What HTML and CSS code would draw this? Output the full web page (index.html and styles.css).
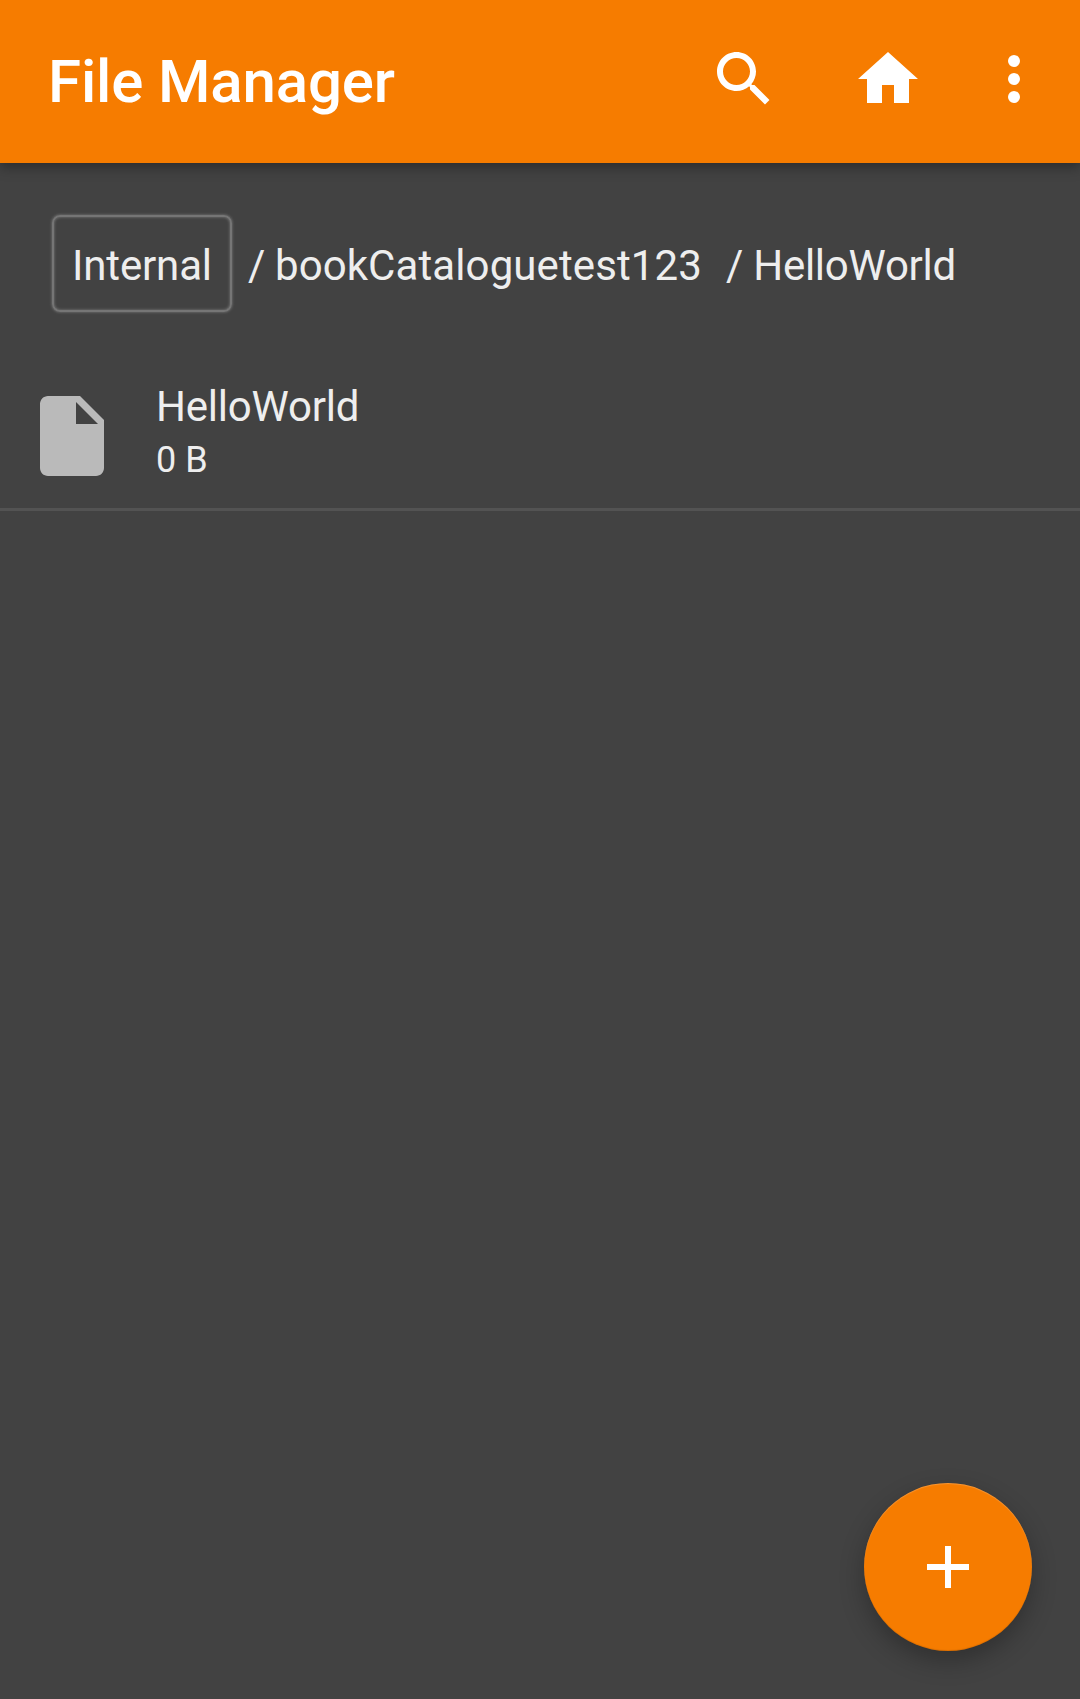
FILE: index.html
```html
<!DOCTYPE html>
<html lang="en">
<head>
<meta charset="utf-8">
<title>File Manager</title>
<link rel="stylesheet" href="styles.css">
</head>
<body>
<header class="app-bar">
  <h1 class="title">File Manager</h1>
  <div class="actions">
    <svg class="icon" viewBox="0 0 24 24"><path d="M15.5 14h-.79l-.28-.27C15.41 12.59 16 11.11 16 9.5 16 5.91 13.09 3 9.5 3S3 5.91 3 9.5 5.91 16 9.5 16c1.61 0 3.09-.59 4.23-1.57l.27.28v.79l5 4.99L20.49 19l-4.99-5zm-6 0C7.01 14 5 11.99 5 9.5S7.01 5 9.5 5 14 7.01 14 9.5 11.99 14 9.5 14z"/></svg>
    <svg class="icon" viewBox="0 0 24 24"><path d="M10 20v-6h4v6h5v-8h3L12 3 2 12h3v8z"/></svg>
    <svg class="icon icon-more" viewBox="0 0 24 24"><circle cx="12" cy="6" r="2"/><circle cx="12" cy="12" r="2"/><circle cx="12" cy="18" r="2"/></svg>
  </div>
</header>
<main>
  <nav class="path">
    <span class="storage">Internal</span>
    <span class="crumb">/ bookCataloguetest123</span>
    <span class="crumb crumb-last">/ HelloWorld</span>
  </nav>
  <div class="file">
    <svg class="file-icon" viewBox="0 0 24 24"><path d="M6 2c-1.1 0-2 .9-2 2v16c0 1.1.9 2 2 2h12c1.1 0 2-.9 2-2V8l-6-6H6zm7 7V3.5L18.5 9H13z"/></svg>
    <div class="file-text">
      <div class="file-name">HelloWorld</div>
      <div class="file-size">0 B</div>
    </div>
  </div>
</main>
<button class="fab" aria-label="Add"><svg class="icon" viewBox="0 0 24 24"><path d="M19 13h-6v6h-2v-6H5v-2h6V5h2v6h6v2z"/></svg></button>
</body>
</html>
```
FILE: styles.css
```css
* { box-sizing: border-box; }
body {
  margin: 0;
  height: 1699px;
  overflow: hidden;
  background: #424242;
  color: #eee;
  font-family: Roboto, "Liberation Sans", sans-serif;
}
.app-bar {
  display: flex;
  justify-content: space-between;
  height: 163px;
  padding: 43px 30px 0 48px;
  background: #f67c00;
  color: #fff;
  box-shadow: 0 4px 12px rgba(0, 0, 0, .35);
}
.title {
  margin: 4px 0 0;
  font-size: 60px;
  font-weight: 500;
  line-height: 70px;
  letter-spacing: -.15px;
}
.actions { display: flex; }
.icon {
  display: block;
  width: 72px;
  height: 72px;
  margin-right: 72px;
  fill: #fff;
}
.icon-more { margin-left: -18px; margin-right: 0; }
.path {
  display: flex;
  align-items: center;
  padding: 52px 0 0 52px;
  font-size: 42px;
  line-height: 50px;
  white-space: nowrap;
}
.storage {
  width: 180px;
  height: 97px;
  padding: 24px 0 0 18px;
  border: 2px solid #757575;
  border-radius: 8px;
  box-shadow: 0 0 3px #808080, inset 0 0 3px #808080;
  letter-spacing: -.15px;
}
.crumb {
  margin: 5px 0 0 16px;
  letter-spacing: .1px;
  word-spacing: -1px;
}
.crumb-last {
  margin-left: 24px;
  letter-spacing: -.25px;
  word-spacing: 0;
}
.file {
  display: flex;
  height: 151px;
  margin-top: 48px;
  padding: 28px 24px 0;
  border-bottom: 3px solid #535353;
}
.file-icon { width: 96px; height: 96px; fill: #bababa; }
.file-text { margin: -6px 0 0 36px; }
.file-name { font-size: 42px; line-height: 50px; letter-spacing: -.2px; }
.file-size { font-size: 36px; line-height: 50px; margin-top: 3px; }
.fab {
  position: absolute;
  left: 864px;
  top: 1483px;
  width: 168px;
  height: 168px;
  padding: 48px;
  border: 0;
  border-radius: 50%;
  background: #f67c00;
  box-shadow: 0 10px 24px rgba(0, 0, 0, .27), inset 0 1px 1px rgba(255, 255, 255, .2), inset 0 -1px 1px rgba(0, 0, 0, .1);
}
.fab .icon { margin: 0; }
```
